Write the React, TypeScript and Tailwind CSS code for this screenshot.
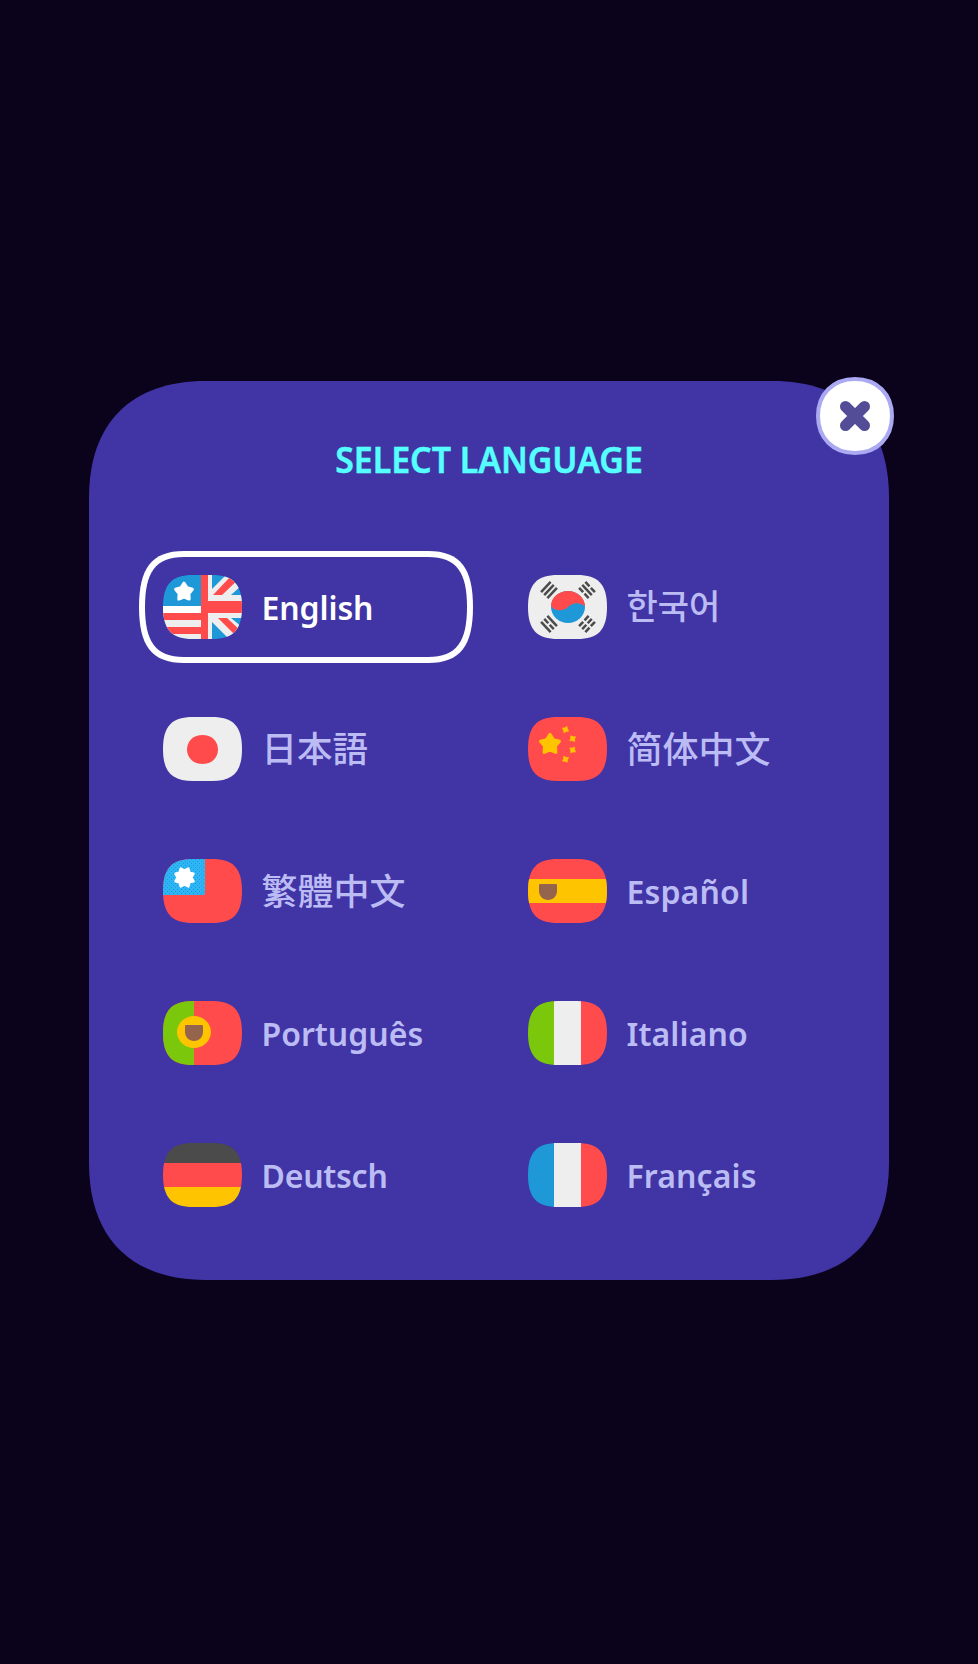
import React, { useState } from "react";

const FLAG_SHAPE =
  "M0 32C0 9 9 0 30 0H49C70 0 79 9 79 32C79 55 70 64 49 64H30C9 64 0 55 0 32Z";

const RED = "#ff4b4b";
const BLUE = "#1f98d8";
const LIGHT = "#eeeeee";
const YELLOW = "#ffc400";
const GREEN = "#7ac70c";

function starPoints(cx: number, cy: number, points: number, outer: number, inner: number, turn = -90) {
  return Array.from({ length: points * 2 }, (_, i) => {
    const r = i % 2 === 0 ? outer : inner;
    const a = ((turn + (i * 180) / points) * Math.PI) / 180;
    return `${(cx + r * Math.cos(a)).toFixed(2)},${(cy + r * Math.sin(a)).toFixed(2)}`;
  }).join(" ");
}

function Flag({ id, children }: { id: string; children: React.ReactNode }) {
  return (
    <svg width="79" height="64" viewBox="0 0 79 64" className="shrink-0" aria-hidden="true">
      <clipPath id={`flag-${id}`}>
        <path d={FLAG_SHAPE} />
      </clipPath>
      <g clipPath={`url(#flag-${id})`}>{children}</g>
    </svg>
  );
}

function Shield({ x, y }: { x: number; y: number }) {
  return (
    <path
      transform={`translate(${x} ${y})`}
      d="M1 0H17Q18 0 18 1V7C18 12 14 16 9 16S0 12 0 7V1Q0 0 1 0Z"
      fill="#94644c"
    />
  );
}

function Trigram({ x, y, angle, broken }: { x: number; y: number; angle: number; broken: boolean[] }) {
  return (
    <g transform={`translate(${x} ${y}) rotate(${angle})`} fill="#4b4b4b">
      {broken.map((split, i) => {
        const top = (i - 1) * 4.3 - 1.25;
        return split ? (
          <g key={i}>
            <rect x="-7" y={top} width="6" height="2.5" />
            <rect x="1" y={top} width="6" height="2.5" />
          </g>
        ) : (
          <rect key={i} x="-7" y={top} width="14" height="2.5" />
        );
      })}
    </g>
  );
}

function Vertical({ left }: { left: string }) {
  return (
    <>
      <rect width="26" height="64" fill={left} />
      <rect x="26" width="27" height="64" fill={LIGHT} />
      <rect x="53" width="26" height="64" fill={RED} />
    </>
  );
}

const flags: Record<string, React.ReactNode> = {
  en: (
    <>
      <rect width="79" height="64" fill={BLUE} />
      <rect y="31" width="38" height="33" fill={LIGHT} />
      <rect y="31" width="38" height="7" fill="#ffffff" />
      <rect y="38" width="38" height="7" fill={RED} />
      <rect y="52" width="38" height="7" fill={RED} />
      <polygon
        points={starPoints(21, 17, 5, 8.8, 5.2)}
        fill="#ffffff"
        stroke="#ffffff"
        strokeWidth="3"
        strokeLinejoin="round"
      />
      <path d="M49 14L63 0H79V10L68 20H49Z" fill={LIGHT} />
      <path d="M50 20L69 0H79V1L59 20Z" fill={RED} />
      <path d="M49 43H68L79 52V64H66L49 47Z" fill={LIGHT} />
      <path d="M55 43H64L79 57V64H76Z" fill={RED} />
      <rect x="45" width="4" height="64" fill={LIGHT} />
      <rect x="45" y="20" width="34" height="23" fill={LIGHT} />
      <rect x="38" width="7" height="64" fill={RED} />
      <rect x="38" y="26" width="41" height="12" fill={RED} />
    </>
  ),
  ko: (
    <>
      <rect width="79" height="64" fill={LIGHT} />
      <ellipse cx="40" cy="32" rx="17" ry="16" fill={BLUE} />
      <path
        d="M23 31C23 22.5 30.6 16 40 16S57 23 57 31.5C53 27.3 45 26.8 40 32C35 36.5 27 36.5 23 31Z"
        fill={RED}
      />
      <Trigram x={21} y={15} angle={-47} broken={[false, false, false]} />
      <Trigram x={59} y={15} angle={47} broken={[true, false, true]} />
      <Trigram x={21} y={49} angle={47} broken={[false, true, false]} />
      <Trigram x={59} y={49} angle={-47} broken={[true, true, true]} />
    </>
  ),
  ja: (
    <>
      <rect width="79" height="64" fill={LIGHT} />
      <path d="M24 32.5C24 24 30.5 18 39.5 18S55 24 55 32.5S48.5 47 39.5 47S24 41 24 32.5Z" fill={RED} />
    </>
  ),
  cn: (
    <>
      <rect width="79" height="64" fill={RED} />
      <polygon
        points={starPoints(22, 27.3, 5, 10, 5.8)}
        fill={YELLOW}
        stroke={YELLOW}
        strokeWidth="3"
        strokeLinejoin="round"
      />
      {[
        [37.5, 12.7, -65],
        [44.7, 21.7, -35],
        [44.7, 33, -55],
        [37.5, 42.3, -30],
      ].map(([x, y, turn]) => (
        <polygon
          key={y}
          points={starPoints(x, y, 4, 3.5, 2, turn)}
          fill={YELLOW}
          stroke={YELLOW}
          strokeWidth="0.7"
          strokeLinejoin="round"
        />
      ))}
    </>
  ),
  tw: (
    <>
      <pattern id="canton-dots" width="4" height="4" patternUnits="userSpaceOnUse">
        <rect width="4" height="4" fill="#2db5f5" />
        <rect width="1" height="1" fill="#1f98d8" />
        <rect x="2" y="2" width="1" height="1" fill="#1f98d8" />
      </pattern>
      <rect width="79" height="64" fill={RED} />
      <path d="M0 0H42V34Q42 36 40 36H0Z" fill="url(#canton-dots)" />
      <polygon
        points={starPoints(21.5, 18.5, 8, 9.8, 7, -67.5)}
        fill="#ffffff"
        stroke="#ffffff"
        strokeWidth="2.4"
        strokeLinejoin="round"
      />
    </>
  ),
  es: (
    <>
      <rect width="79" height="64" fill={RED} />
      <rect y="20" width="79" height="24" fill={YELLOW} />
      <Shield x={11} y={25} />
    </>
  ),
  pt: (
    <>
      <rect width="79" height="64" fill={RED} />
      <rect width="31" height="64" fill={GREEN} />
      <ellipse cx="31" cy="31" rx="17" ry="16" fill={YELLOW} />
      <Shield x={22} y={24} />
    </>
  ),
  it: <Vertical left={GREEN} />,
  de: (
    <>
      <rect width="79" height="20" fill="#4b4b4b" />
      <rect y="20" width="79" height="24" fill={RED} />
      <rect y="44" width="79" height="20" fill={YELLOW} />
    </>
  ),
  fr: <Vertical left={BLUE} />,
};

const LATIN = "font-['Noto_Sans',sans-serif] text-[32px] font-semibold pt-[2px]";

const languages = [
  { id: "en", name: "English", style: `${LATIN} tracking-[-0.1px]` },
  { id: "ko", name: "한국어", style: "font-['Noto_Sans_CJK_KR',sans-serif] text-[34px] font-medium pb-[4px]" },
  { id: "ja", name: "日本語", style: "font-['Noto_Sans_CJK_JP',sans-serif] text-[35.5px] font-medium pb-[4px]" },
  { id: "cn", name: "简体中文", style: "font-['Noto_Sans_CJK_SC',sans-serif] text-[36px] font-medium pb-[4px]" },
  { id: "tw", name: "繁體中文", style: "font-['Noto_Sans_CJK_TC',sans-serif] text-[36px] font-medium pb-[4px]" },
  { id: "es", name: "Español", style: `${LATIN} tracking-[0.15px]` },
  { id: "pt", name: "Português", style: LATIN },
  { id: "it", name: "Italiano", style: `${LATIN} tracking-[0.1px]` },
  { id: "de", name: "Deutsch", style: `${LATIN} tracking-[-0.25px]` },
  { id: "fr", name: "Français", style: `${LATIN} tracking-[0.1px]` },
];

const OPTION_OUTER =
  "[clip-path:path('M0_56C0_18_12_0_45_0H289C322_0_334_18_334_56C334_94_322_112_289_112H45C12_112_0_94_0_56Z')]";
const OPTION_INNER =
  "[clip-path:path('M0_50C0_16_10_0_39_0H283C312_0_322_16_322_50C322_84_312_100_283_100H39C10_100_0_84_0_50Z')]";

export default function App() {
  const [selected, setSelected] = useState("en");

  return (
    <main className="flex min-h-screen justify-center bg-[#0b021c] pt-[381px]">
      <div className="relative h-[899px] w-[800px]">
        <section className="flex h-full flex-col bg-[#4134a5] px-[50px] [clip-path:path('M0_117C0_42_42_0_117_0H683C758_0_800_42_800_117V782C800_857_758_899_683_899H117C42_899_0_857_0_782Z')]">
          <h1 className="flex h-[170px] scale-x-[0.94] items-center justify-center pb-[13px] font-['Noto_Sans',sans-serif] text-[36px] font-semibold whitespace-nowrap text-[#55ffff] [-webkit-text-stroke:0.5px_#55ffff]">
            SELECT LANGUAGE
          </h1>
          <div className="grid grid-cols-[334px_334px] gap-x-[31px] gap-y-[30px]">
            {languages.map((language) => {
              const active = language.id === selected;
              return (
                <button
                  key={language.id}
                  onClick={() => setSelected(language.id)}
                  className={`h-[112px] p-[6px] text-left ${OPTION_OUTER} ${active ? "bg-white" : "bg-transparent"}`}
                >
                  <span className={`flex h-[100px] items-center gap-[19.5px] bg-[#4134a5] pl-[18px] ${OPTION_INNER}`}>
                    <Flag id={language.id}>{flags[language.id]}</Flag>
                    <span
                      className={`leading-[48px] whitespace-nowrap ${language.style} ${active ? "text-white" : "text-[#bcbcf4]"}`}
                    >
                      {language.name}
                    </span>
                  </span>
                </button>
              );
            })}
          </div>
        </section>
        <button aria-label="Close" className="absolute -top-1 left-[727px] size-[78px]">
          <svg width="78" height="78" viewBox="0 0 78 78">
            <path
              d="M2 39C2 17 17 2 39 2S76 17 76 39S61 76 39 76S2 61 2 39Z"
              fill="#fff"
              stroke="#aaa9f2"
              strokeWidth="4"
            />
            <path d="M29.5 29.5L48.5 48.5M48.5 29.5L29.5 48.5" stroke="#534d98" strokeWidth="11" strokeLinecap="round" />
          </svg>
        </button>
      </div>
    </main>
  );
}
